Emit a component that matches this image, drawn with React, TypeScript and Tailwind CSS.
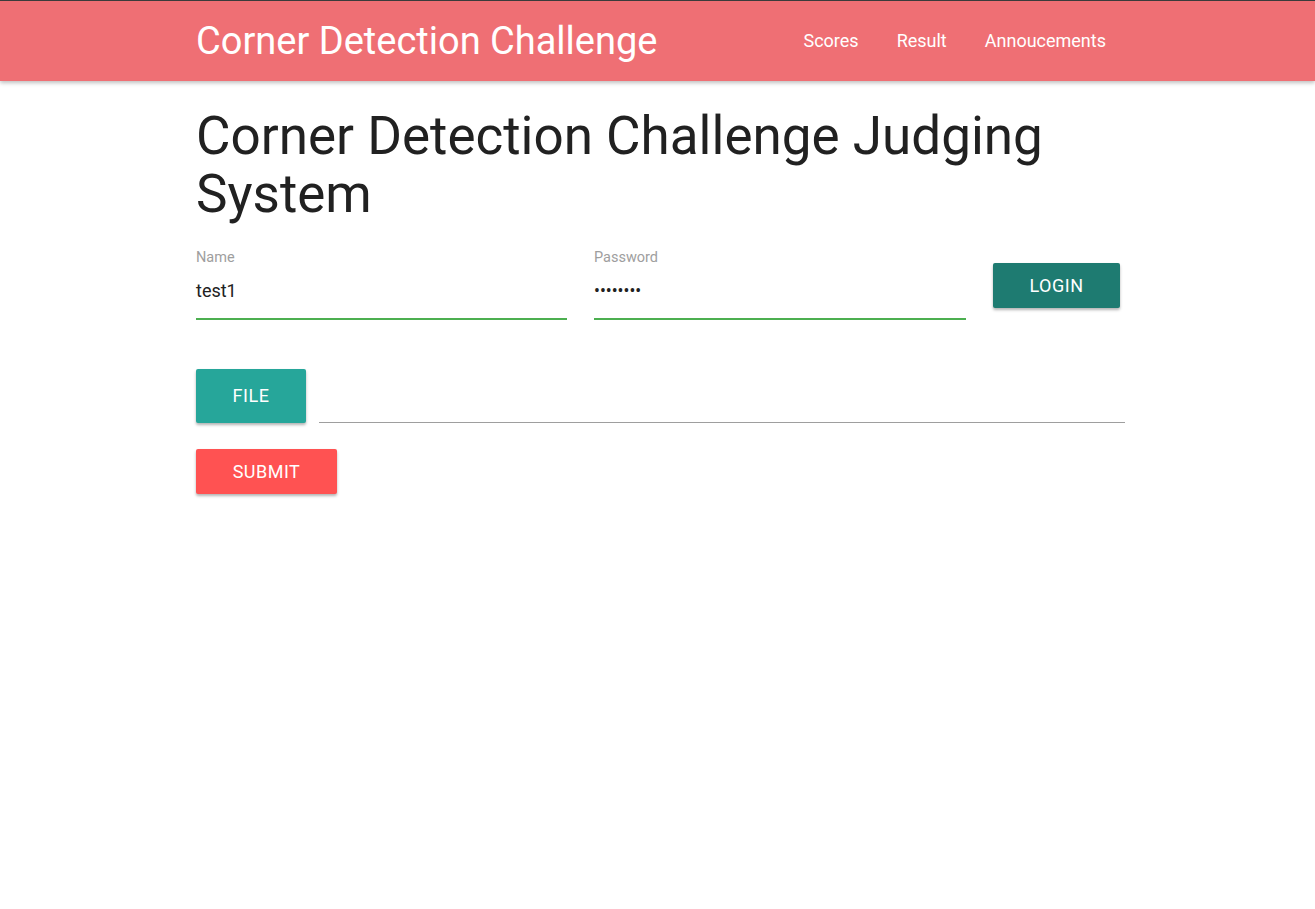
import React from "react";

const App: React.FC = () => {
  return (
    <div className="min-h-[909px] bg-white font-['Roboto',sans-serif] text-[#212121]">
      <header className="border-t border-[#3b3b3b] bg-[#ef6f74] shadow-[0_2px_4px_rgba(0,0,0,0.25)]">
        <div className="ml-[196px] flex h-[80px] w-[929px] items-center justify-between">
          <span className="text-[38px] text-white">Corner Detection Challenge</span>
          <ul className="flex items-center pb-[2px] text-[18px] text-white">
            {["Scores", "Result", "Annoucements"].map((item) => (
              <li key={item} className="px-[19px]">
                {item}
              </li>
            ))}
          </ul>
        </div>
      </header>

      <main className="ml-[196px] w-[929px]">
        <h1 className="mt-[26px] text-[53px] leading-[58px]">Corner Detection Challenge Judging System</h1>

        <div className="mt-[24px] flex items-start">
          <div className="w-[371px]">
            <label className="block text-[14.5px] text-[#9e9e9e]">Name</label>
            <div className="mt-[12px] border-b-2 border-[#4caf50] pb-[17px] text-[18px] leading-[20px]">test1</div>
          </div>
          <div className="ml-[27px] w-[372px]">
            <label className="block text-[14.5px] text-[#9e9e9e]">Password</label>
            <div className="mt-[12px] border-b-2 border-[#4caf50] pb-[17px] text-[17.5px] leading-[20px]">
              ••••••••
            </div>
          </div>
          <button className="ml-[27px] mt-[16px] h-[45px] w-[127px] rounded-[2px] bg-[#1e7b71] text-[18px] tracking-[0.5px] text-white shadow-[0_2px_3px_rgba(0,0,0,0.3)]">
            LOGIN
          </button>
        </div>

        <div className="mt-[49px] flex items-end">
          <button className="h-[54px] w-[110px] rounded-[2px] bg-[#26a69a] text-[18px] tracking-[0.5px] text-white shadow-[0_2px_3px_rgba(0,0,0,0.3)]">
            FILE
          </button>
          <div className="ml-[13px] flex-1 border-b border-[#9e9e9e]" />
        </div>

        <button className="mt-[26px] h-[45px] w-[141px] rounded-[2px] bg-[#ff5252] text-[18px] tracking-[0.5px] text-white shadow-[0_2px_3px_rgba(0,0,0,0.3)]">
          SUBMIT
        </button>
      </main>
    </div>
  );
};

export default App;
